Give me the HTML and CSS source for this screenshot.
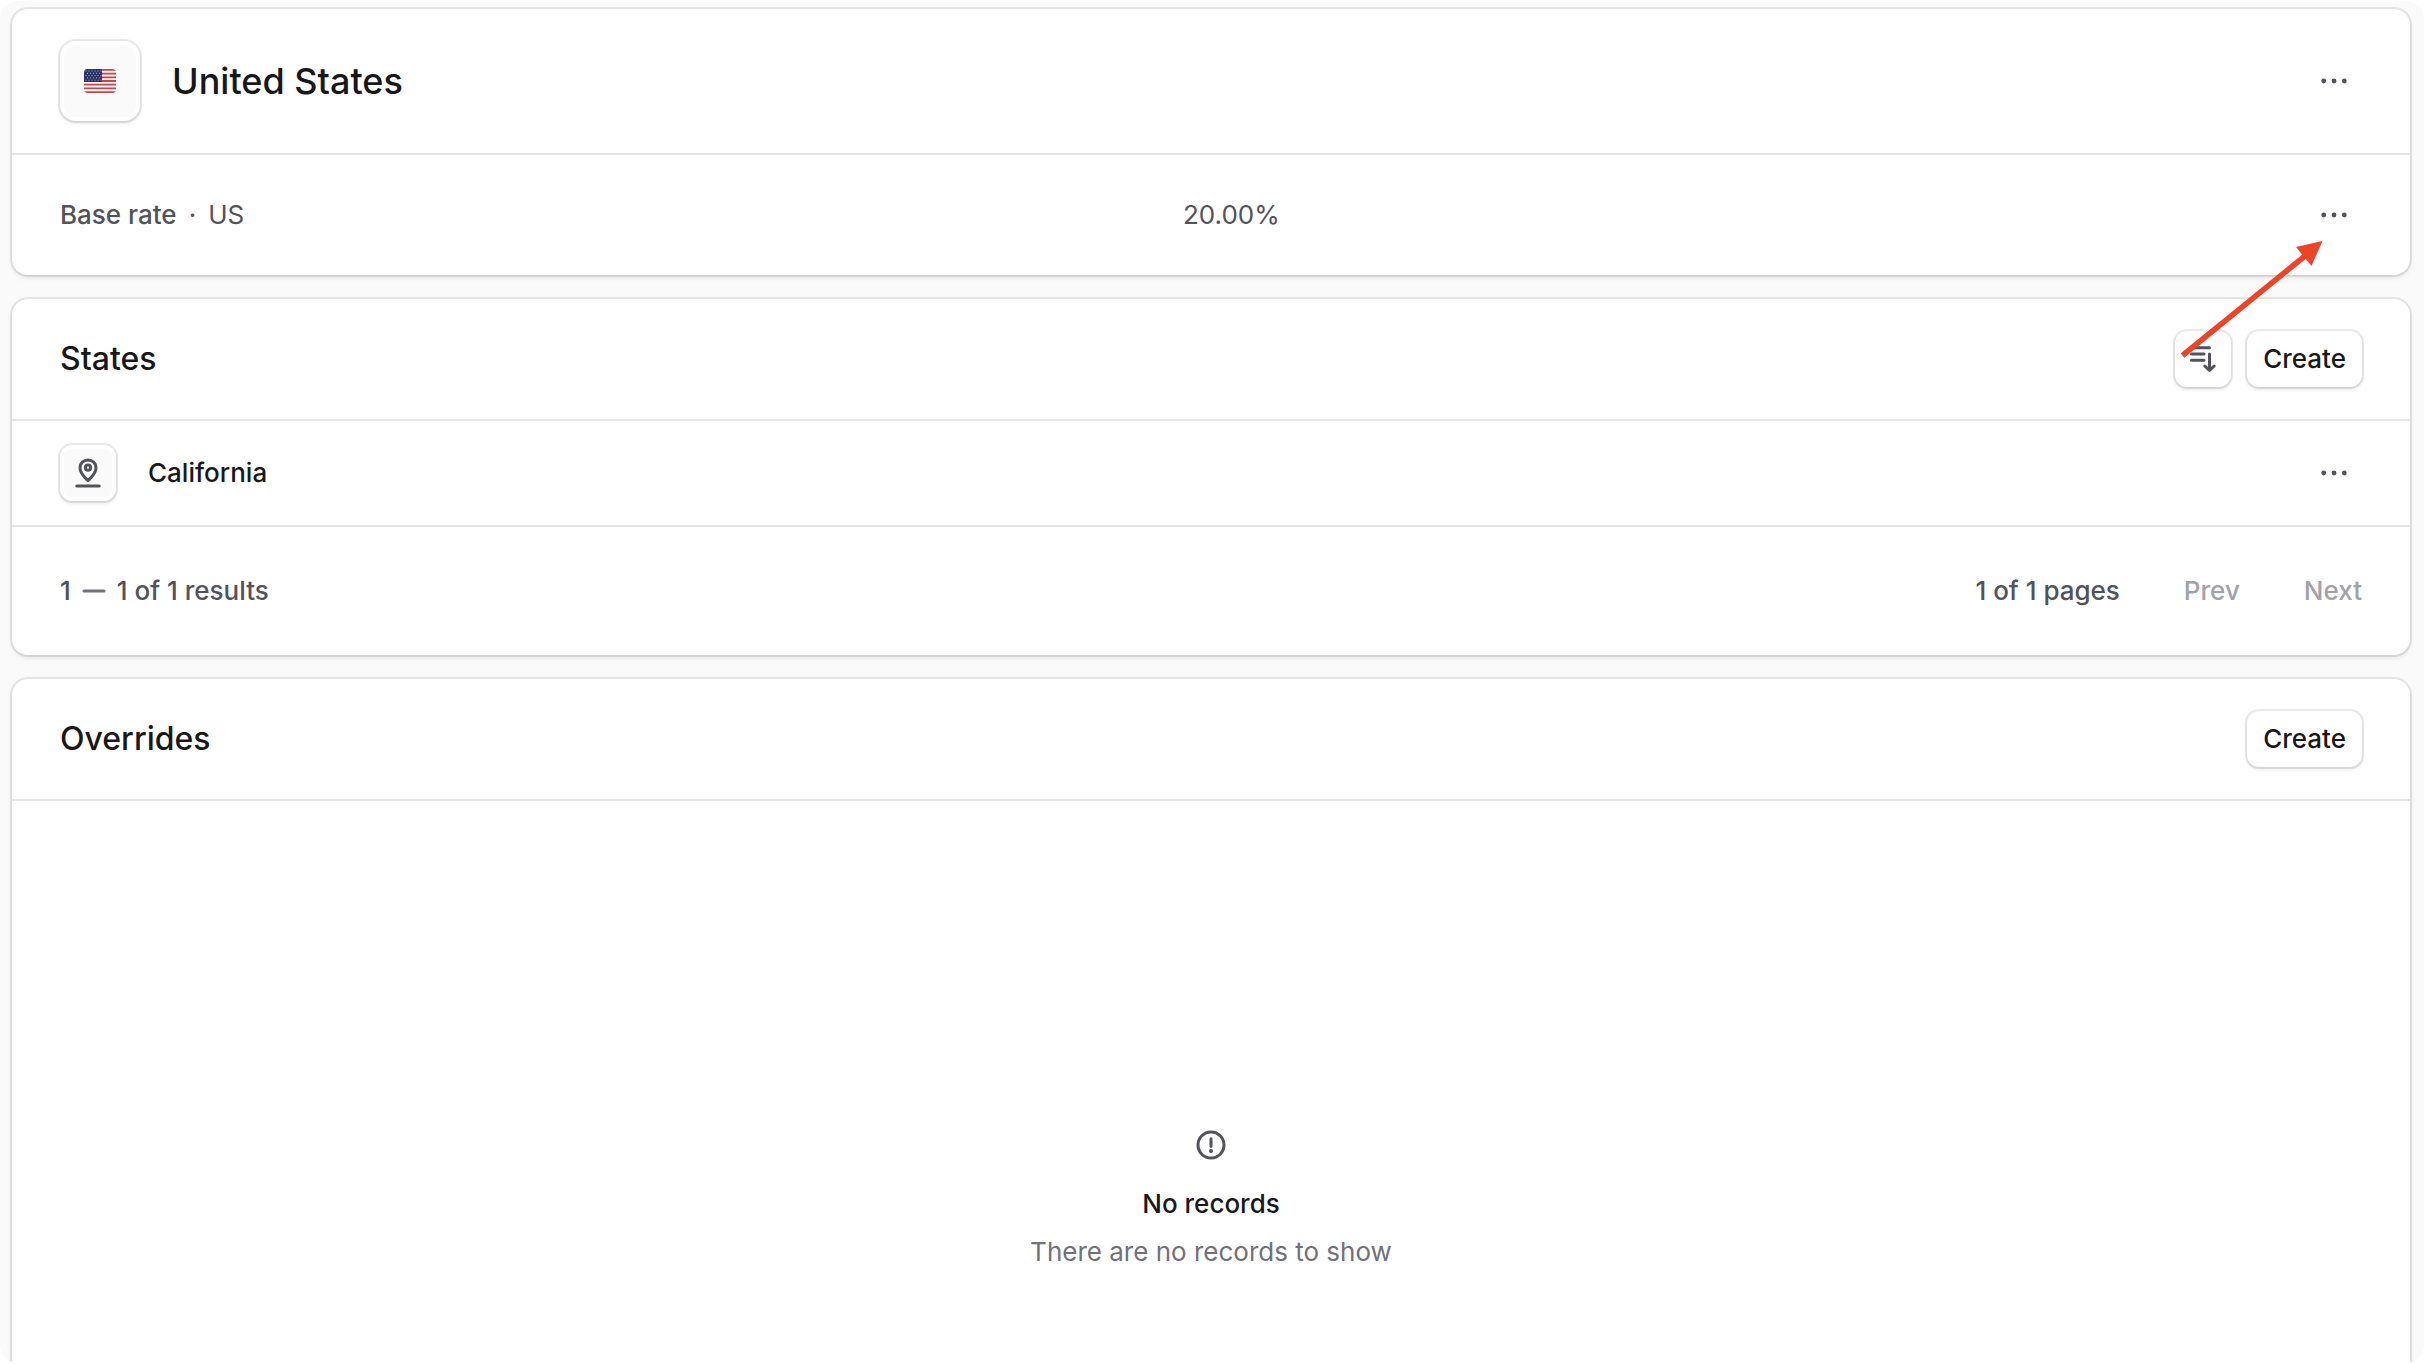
FILE: index.html
```html
<!DOCTYPE html>
<html lang="en">
<head>
    <meta charset="UTF-8">
    <meta name="viewport" content="width=device-width, initial-scale=1.0">
    <title>United States - Tax Region</title>
    <link rel="stylesheet" href="styles.css">
</head>
<body>

    <!-- Shared icons -->
    <svg class="icon-defs" aria-hidden="true">
        <symbol id="dots" viewBox="0 0 30 30">
            <circle cx="4.7" cy="15" r="2.4"/>
            <circle cx="15" cy="15" r="2.4"/>
            <circle cx="25.3" cy="15" r="2.4"/>
        </symbol>
    </svg>

    <main class="page">

        <!-- Region -->
        <section class="card">
            <header class="row row-header">
                <div class="title">
                    <span class="tile tile-large">
                        <span class="tile-inner">
                            <svg class="flag" viewBox="0 0 32 24" role="img" aria-label="Flag of the United States">
                                <rect width="32" height="24" fill="#f7f5f5"/>
                                <path d="M0 .9h32M0 4.6h32M0 8.3h32M0 12h32M0 15.7h32M0 19.4h32M0 23.1h32" stroke="#c2484d" stroke-width="1.8"/>
                                <rect width="18" height="13" fill="#2b3468"/>
                                <path d="M1.5 2h16M3 4.3h14M1.5 6.6h16M3 8.9h14M1.5 11.2h16" stroke="#a9aec8" stroke-width="1" stroke-dasharray="1 2"/>
                            </svg>
                        </span>
                    </span>
                    <h1>United States</h1>
                </div>
                <button class="menu-btn" aria-label="Region actions"><svg class="icon icon-fill"><use href="#dots"/></svg></button>
            </header>
            <div class="row rate">
                <div class="rate-name"><span class="medium">Base rate</span><span>·</span><span>US</span></div>
                <div>20.00%</div>
                <button class="menu-btn" aria-label="Base rate actions"><svg class="icon icon-fill"><use href="#dots"/></svg></button>
            </div>
        </section>

        <!-- States -->
        <section class="card">
            <header class="row">
                <h2>States</h2>
                <div class="actions">
                    <button class="btn btn-icon" aria-label="Sort">
                        <svg class="icon" viewBox="0 0 30 30">
                            <path d="M3.5 3.7h18M3.5 10h12.5M3.5 16.2h12.5M21.5 10v16M16.8 22l4.7 4.4 4.7-4.4"/>
                        </svg>
                    </button>
                    <button class="btn">Create</button>
                </div>
            </header>
            <div class="row row-item">
                <div class="title">
                    <span class="tile">
                        <span class="tile-inner">
                            <svg class="icon" viewBox="0 0 30 30">
                                <path d="M3.8 28h22.4"/>
                                <path d="M23 9.7c0 5.3-5.5 10.6-8 12.8-2.5-2.2-8-7.5-8-12.8C7 5.2 10.6 2 15 2s8 3.2 8 7.7z"/>
                                <circle cx="15" cy="9.7" r="2.6"/>
                            </svg>
                        </span>
                    </span>
                    <span class="name">California</span>
                </div>
                <button class="menu-btn" aria-label="California actions"><svg class="icon icon-fill"><use href="#dots"/></svg></button>
            </div>
            <footer class="pagination">
                <div class="results">
                    <span>1</span>
                    <svg class="icon dash" viewBox="0 0 30 30"><path d="M5 15h20"/></svg>
                    <span>1 of 1 results</span>
                </div>
                <nav class="pages" aria-label="Pages">
                    <span>1 of 1 pages</span>
                    <button disabled>Prev</button>
                    <button disabled>Next</button>
                </nav>
            </footer>
        </section>

        <!-- Overrides -->
        <section class="card">
            <header class="row">
                <h2>Overrides</h2>
                <button class="btn">Create</button>
            </header>
            <div class="empty">
                <svg class="icon" viewBox="0 0 30 30">
                    <circle cx="15" cy="15" r="13"/>
                    <path d="M15 8.8v7.4"/>
                    <circle class="point" cx="15" cy="21" r="2"/>
                </svg>
                <h3>No records</h3>
                <p>There are no records to show</p>
            </div>
        </section>

        <!-- Arrow pointing at the base rate menu -->
        <svg class="arrow" viewBox="0 0 150 130" aria-hidden="true">
            <path d="M2.5 115.5L128 13.5" stroke="#ec4427" stroke-width="5.5"/>
            <path d="M142.500 1l-26.500 6 15.500 19z" fill="#ec4427"/>
        </svg>
    </main>

</body>
</html>
```
FILE: styles.css
```css
* {
    box-sizing: border-box;
}
body {
    margin: 0;
    padding: 1px 0;
    background-color: #ffffff;
    color: #18181b;
    font-family: Inter, "Liberation Sans", sans-serif;
    font-optical-sizing: none;
    font-size: 26px;
    line-height: 40px;
}
h1, h2, h3, p {
    margin: 0;
    font-weight: 500;
}
button {
    font: inherit;
    font-optical-sizing: none;
    border: none;
    background: none;
    padding: 0;
    cursor: pointer;
}
.icon-defs {
    display: none;
}
.page {
    position: relative;
    display: flex;
    flex-direction: column;
    gap: 24px;
    height: calc(100vh - 2px); /* last card runs off the bottom */
    padding: 8px 14px 0 12px;
    overflow: hidden;
    background-color: #fafafa;
    border-radius: 18px;
}

/* Cards */
.card {
    flex-shrink: 0;
    background-color: #ffffff;
    border-radius: 16px;
    box-shadow: 0 0 0 2px rgba(0, 0, 0, 0.08), 0 2px 4px 0 rgba(0, 0, 0, 0.08), 0 4px 8px 0 rgba(0, 0, 0, 0.03);
}
.row {
    display: flex;
    align-items: center;
    justify-content: space-between;
    padding: 32px 48px;
}
.row + .row, .pagination, .empty {
    border-top: 2px solid #e4e4e5;
}
.row-item {
    padding: 24px 48px;
}
.title {
    display: flex;
    align-items: center;
    gap: 32px;
}
h1 {
    font-size: 36px;
}
h2 {
    font-size: 32px;
}
.name, .medium, .btn {
    font-weight: 500;
}

/* Framed icon tiles */
.tile {
    width: 56px;
    height: 56px;
    padding: 4px;
    border-radius: 12px;
    background-color: #ffffff;
    box-shadow: 0 0 0 2px rgba(0, 0, 0, 0.08), 0 2px 4px 0 rgba(0, 0, 0, 0.12);
}
.tile-inner {
    display: flex;
    align-items: center;
    justify-content: center;
    height: 100%;
    border-radius: 8px;
    background-color: #fafafa;
}
.tile-large {
    width: 80px;
    height: 80px;
    border-radius: 16px;
}
.tile-large .tile-inner {
    border-radius: 12px;
}
.flag {
    width: 32px;
    height: 24px;
    border-radius: 4px;
}
.icon {
    width: 30px;
    height: 30px;
    fill: none;
    stroke: #52525b;
    stroke-width: 3;
    stroke-linecap: round;
    stroke-linejoin: round;
}
.icon-fill, .point {
    fill: #52525b;
    stroke: none;
}

/* Buttons */
.menu-btn {
    display: flex;
    align-items: center;
    justify-content: center;
    width: 56px;
    height: 56px;
}
.actions {
    display: flex;
    gap: 16px;
}
.btn {
    display: flex;
    align-items: center;
    justify-content: center;
    height: 56px;
    padding: 0 16px;
    color: #18181b;
    background-color: #ffffff;
    border-radius: 12px;
    box-shadow: 0 0 0 2px rgba(0, 0, 0, 0.08), 0 2px 4px 0 rgba(0, 0, 0, 0.12);
}
.btn-icon {
    width: 56px;
    padding: 0;
}

/* Base rate */
.rate {
    display: grid;
    grid-template-columns: 1fr 1fr 56px;
    color: #52525b;
}
.rate-name {
    display: flex;
    gap: 12px;
}

/* Pagination */
.pagination {
    display: flex;
    align-items: center;
    justify-content: space-between;
    padding: 44px 48px;
    color: #52525b;
    font-weight: 500;
}
.results {
    display: flex;
    align-items: center;
    gap: 8px;
}
.dash {
    stroke: #71717a;
}
.pages {
    display: flex;
    gap: 64px;
}
.pages button {
    color: #a1a1aa;
}

/* Empty state */
.empty {
    display: flex;
    flex-direction: column;
    align-items: center;
    padding: 329px 0;
}
.empty h3 {
    margin-top: 24px;
    font-size: 26px;
}
.empty p {
    margin-top: 8px;
    color: #71717a;
    font-weight: 400;
}

.arrow {
    position: absolute;
    top: 239px;
    right: 94px;
    width: 150px;
    height: 130px;
    fill: none;
}
```
